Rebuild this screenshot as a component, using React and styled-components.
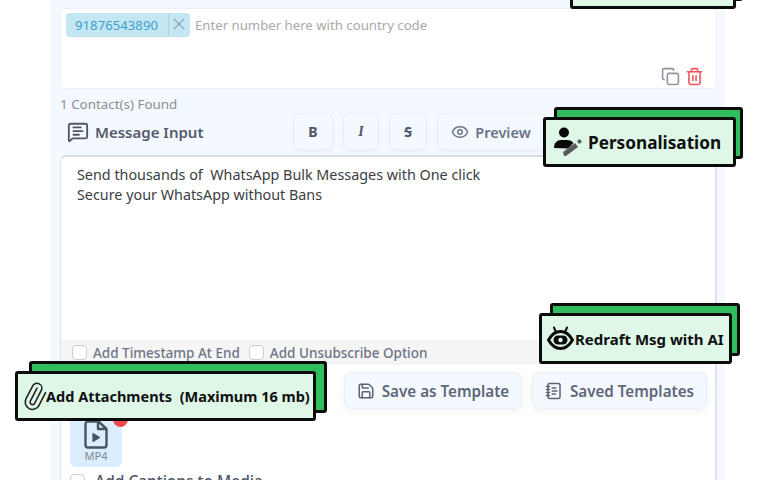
import React from "react";
import styled, { createGlobalStyle } from "styled-components";
import { Copy, Trash2, Eye, Save, NotebookText, MessageSquareText, Paperclip, X } from "lucide-react";

const Global = createGlobalStyle`
  html, body { margin: 0; padding: 0; background: #fff; }
  * { box-sizing: border-box; }
`;

const Page = styled.div`
  position: relative;
  width: 775px;
  height: 480px;
  overflow: hidden;
  background: #fff;
  font-family: "Noto Sans", "Open Sans", sans-serif;
`;

const Panel = styled.div`
  width: 675px;
  height: 520px;
  margin-left: 50px;
  padding: 8px 8px 0 10px;
  background: #f4f8ff;
  display: flex;
  flex-direction: column;
`;

const NumberBox = styled.div`
  height: 81px;
  flex: none;
  background: #fff;
  border: 1px solid #edf0f5;
  border-radius: 5px;
  padding: 4px 5px;
  display: flex;
  flex-direction: column;
  justify-content: space-between;
`;

const TagRow = styled.div`
  display: flex;
  align-items: center;
  gap: 5px;
`;

const Tag = styled.div`
  display: flex;
  height: 24px;
  border-radius: 4px;
  background: #c4e7f4;
  color: #3c9fcb;
  font-size: 13.2px;
  line-height: 24px;
`;

const TagText = styled.span`
  padding: 0 10px 0 9px;
  border-right: 1px solid #acd6e6;
`;

const TagClose = styled.span`
  width: 21px;
  display: flex;
  align-items: flex-start;
  padding-top: 1px;
  justify-content: center;
  color: #8fa9b5;
`;

const Placeholder = styled.span`
  font-size: 13.2px;
  color: #a9a9a9;
`;

const BoxActions = styled.div`
  display: flex;
  justify-content: flex-end;
  gap: 5px;
  padding-right: 7px;
  margin-bottom: -2px;
`;

const FoundText = styled.div`
  height: 19px;
  margin-top: 5px;
  font-size: 13.4px;
  line-height: 20px;
  color: #8b8f96;
`;

const HeaderRow = styled.div`
  height: 37px;
  flex: none;
  display: flex;
  align-items: center;
  gap: 10px;
`;

const HeaderTitle = styled.div`
  display: flex;
  align-items: center;
  gap: 6px;
  margin-left: 7px;
  margin-right: auto;
  color: #555c6c;
  font-size: 15px;
  font-weight: 600;
`;

const Tool = styled.button`
  width: ${(p) => p.$w}px;
  height: 37px;
  padding: 0;
  display: flex;
  align-items: center;
  justify-content: center;
  gap: 6px;
  background: #f4f8ff;
  border: 1px solid #e8edf6;
  border-radius: 7px;
  box-shadow: 0 2px 4px rgba(90, 100, 130, 0.06);
  color: #4f5666;
  font-family: ${(p) => p.$serif ? '"Liberation Serif", serif' : '"Noto Sans", sans-serif'};
  font-size: 14px;
  font-weight: 700;
  font-style: ${(p) => (p.$italic ? "italic" : "normal")};
  text-decoration: ${(p) => (p.$strike ? "line-through" : "none")};
`;

const PreviewTool = styled(Tool)`
  font-weight: 600;
  font-size: 14.5px;
  color: #6b7488;
  margin-right: 172px;
`;

const MessageCard = styled.div`
  margin-top: 5px;
  flex: 1;
  background: #fff;
  border: 1px solid #dfe3ec;
  border-top: 2px solid #d8dce5;
  border-right-width: 2px;
  border-radius: 6px 6px 0 0;
  display: flex;
  flex-direction: column;
`;

const MessageText = styled.div`
  height: 183px;
  padding: 8px 16px;
  font-size: 14.35px;
  line-height: 20px;
  color: #3a3d42;
  white-space: pre-wrap;
`;

const OptionStrip = styled.div`
  height: 25px;
  background: #f5f5f5;
  margin-right: 4px;
  padding-left: 11px;
  display: flex;
  align-items: center;
  gap: 9px;
`;

const Option = styled.label`
  display: flex;
  align-items: center;
  gap: ${(p) => (p.$dark ? "10px" : "6px")};
  color: ${(p) => (p.$dark ? "#4c5566" : "#6d7484")};
  font-size: ${(p) => (p.$dark ? "15.500px" : "13.500px")};
  font-weight: 500;
`;

const Check = styled.span`
  width: 15px;
  height: 15px;
  flex: none;
  background: #fff;
  border: 1px solid #c8ccd3;
  border-radius: 4px;
`;

const ActionRow = styled.div`
  margin-top: 7px;
  height: 37px;
  flex: none;
  padding-right: 8px;
  display: flex;
  justify-content: flex-end;
  gap: 10px;
`;

const ActionButton = styled.button`
  width: ${(p) => p.$w}px;
  display: flex;
  align-items: center;
  justify-content: center;
  gap: 7px;
  padding: 0;
  background: #f4f8ff;
  border: 1px solid #e8edf6;
  border-radius: 8px;
  box-shadow: 0 3px 8px rgba(90, 100, 130, 0.08);
  color: #5f6779;
  font-family: "Noto Sans", sans-serif;
  font-size: 15.200px;
  font-weight: 600;
`;

const MediaTile = styled.div`
  position: relative;
  width: 52px;
  height: 58px;
  margin: 0 0 3px 9px;
  flex: none;
  background: #dbeeff;
  border-radius: 6px;
  display: flex;
  flex-direction: column;
  align-items: center;
  justify-content: flex-end;
  padding-bottom: 4px;
  color: #7f8794;
  font-size: 11px;
  line-height: 14px;
`;

const MediaBadge = styled.span`
  position: absolute;
  right: -6px;
  top: 3px;
  width: 15px;
  height: 15px;
  border-radius: 50%;
  background: #f0474c;
`;

const CaptionRow = styled.div`
  margin-left: 9px;
`;

const Callout = styled.div`
  position: absolute;
  left: ${(p) => p.$x}px;
  top: ${(p) => p.$y}px;
  width: ${(p) => p.$w}px;
  height: ${(p) => p.$h}px;
  padding-left: ${(p) => p.$pad}px;
  background: #dff7e6;
  border: 3px solid #0b0b0b;
  border-radius: 3px;
  display: flex;
  align-items: center;
  gap: ${(p) => p.$gap}px;
  color: #0f1012;
  font-size: ${(p) => p.$fs}px;
  font-weight: 700;
  white-space: pre;
  &::before {
    content: "";
    position: absolute;
    z-index: -1;
    left: ${(p) => p.$bx}px;
    top: -13px;
    right: ${(p) => -p.$br}px;
    bottom: 5px;
    background: #2fbd5e;
    border: 3px solid #0b0b0b;
    border-radius: 3px;
  }
`;

const CalloutLayer = styled.div`
  position: absolute;
  inset: 0;
  z-index: 1;
`;

const PersonPen = () => (
  <svg width="30" height="32" viewBox="0 0 30 32">
    <circle cx="11" cy="6.500" r="5" fill="#0a0a0a" />
    <path d="M1 22c0-5 3-8 7-8h6c3 0 5 1 6.500 3L15 22.500z" fill="#0a0a0a" />
    <path d="M11 30l-1-4 12-9 3 4-12 9z" fill="#5a5a5a" />
    <path d="M24 15l3-2 2 3-3 2z" fill="#5a5a5a" />
  </svg>
);

const RobotEye = () => (
  <svg width="27" height="27" viewBox="0 0 27 27">
    <path d="M1.500 15C5 8.500 9 6.500 13.500 6.500S22 8.500 25.500 15C22 21 18 23.500 13.500 23.500S5 21 1.500 15z" fill="none" stroke="#0a0a0a" strokeWidth="3" />
    <rect x="6.500" y="10.500" width="14" height="9" rx="4.500" fill="#0a0a0a" />
    <circle cx="13.500" cy="15" r="2.200" fill="#dff7e6" />
    <path d="M8.500 6L7 2.500M18.500 6L20 2.500" stroke="#0a0a0a" strokeWidth="2" strokeLinecap="round" />
  </svg>
);

const VideoFile = () => (
  <svg width="24" height="29" viewBox="0 0 24 29" fill="none" stroke="#4b5362" strokeWidth="2.400" strokeLinejoin="round">
    <path d="M4 1.500h10.500L22.500 9v16a2.500 2.500 0 0 1-2.500 2.500H4A2.500 2.500 0 0 1 1.500 25V4A2.500 2.500 0 0 1 4 1.500z" />
    <path d="M14 1.500V9h8.500" />
    <path d="M9 13.500v8l6.500-4z" fill="#4b5362" strokeWidth="1.200" />
  </svg>
);

const ClipIcon = styled(Paperclip)`
  flex: none;
  margin: 0 -3px 0 -2px;
  transform: rotate(-17deg);
`;

export default function App() {
  return (
    <Page>
      <Global />
      <Panel>
        <NumberBox>
          <TagRow>
            <Tag>
              <TagText>91876543890</TagText>
              <TagClose><X size={20} strokeWidth={1.500} /></TagClose>
            </Tag>
            <Placeholder>Enter number here with country code</Placeholder>
          </TagRow>
          <BoxActions>
            <Copy size={19} color="#8d929c" strokeWidth={2} />
            <Trash2 size={19} color="#f2545b" strokeWidth={2} />
          </BoxActions>
        </NumberBox>
        <FoundText>1 Contact(s) Found</FoundText>
        <HeaderRow>
          <HeaderTitle>
            <MessageSquareText size={22} color="#4f5666" strokeWidth={2} />
            Message Input
          </HeaderTitle>
          <Tool $w={40}>B</Tool>
          <Tool $w={36} $italic $serif>I</Tool>
          <Tool $w={38} $strike>S</Tool>
          <PreviewTool $w={108}>
            <Eye size={18} color="#6f7684" strokeWidth={2} />
            Preview
          </PreviewTool>
        </HeaderRow>
        <MessageCard>
          <MessageText>{"Send thousands of  WhatsApp Bulk Messages with One click\nSecure your WhatsApp without Bans"}</MessageText>
          <OptionStrip>
            <Option><Check />Add Timestamp At End</Option>
            <Option><Check />Add Unsubscribe Option</Option>
          </OptionStrip>
          <ActionRow>
            <ActionButton $w={178}>
              <Save size={18} color="#5d6370" strokeWidth={2} />
              Save as Template
            </ActionButton>
            <ActionButton $w={175}>
              <NotebookText size={18} color="#5d6370" strokeWidth={2} />
              Saved Templates
            </ActionButton>
          </ActionRow>
          <MediaTile>
            <MediaBadge />
            <VideoFile />
            MP4
          </MediaTile>
          <CaptionRow>
            <Option $dark><Check />Add Captions to Media</Option>
          </CaptionRow>
        </MessageCard>
      </Panel>
      <CalloutLayer>
        <Callout $x={570} $y={-41} $w={166} $h={50} $bx={8} $br={10} $pad={8} $gap={6} $fs={16} />
        <Callout $x={543} $y={117} $w={193} $h={50} $bx={8} $br={10} $pad={7} $gap={5} $fs={17.200}>
          <PersonPen />
          Personalisation
        </Callout>
        <Callout $x={539} $y={313} $w={193} $h={51} $bx={8} $br={11} $pad={5} $gap={1} $fs={15}>
          <RobotEye />
          Redraft Msg with AI
        </Callout>
        <Callout $x={15} $y={371} $w={301} $h={50} $bx={11} $br={14} $pad={4} $gap={0} $fs={14.500}>
          <ClipIcon size={29} color="#222" strokeWidth={1.300} />
          {"Add Attachments  (Maximum 16 mb)"}
        </Callout>
      </CalloutLayer>
    </Page>
  );
}
